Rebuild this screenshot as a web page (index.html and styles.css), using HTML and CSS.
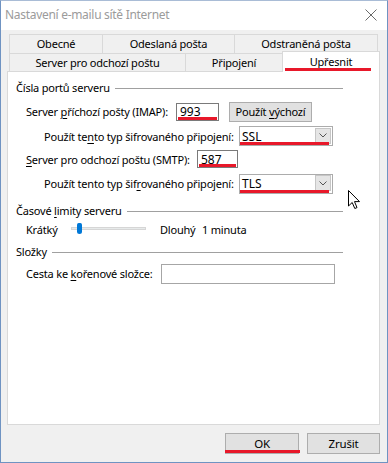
FILE: index.html
```html
<!DOCTYPE html>
<html lang="cs">
<head>
<meta charset="utf-8">
<title>Nastavení e-mailu sítě Internet</title>
<link rel="stylesheet" href="styles.css">
</head>
<body>
<div class="win">
  <div class="titlebar">
    <span class="title">Nastavení e-mailu sítě Internet</span>
    <svg class="close" width="12" height="12" viewBox="0 0 12 12"><path d="M0.5 0.5 L11.5 11.5 M11.5 0.5 L0.5 11.5" stroke="#6a6a6a" stroke-width="1" fill="none"/></svg>
  </div>
  <div class="client">
    <div class="tabs">
      <div class="tabrow r1">
        <div class="tab w-obecne"><span>Obecné</span></div>
        <div class="tab w-odeslana"><span>Odeslaná pošta</span></div>
        <div class="tab w-odstranena"><span>Odstraněná pošta</span></div>
      </div>
      <div class="tabrow r2">
        <div class="tab w-server"><span>Server pro odchozí poštu</span></div>
        <div class="tab w-pripojeni"><span>Připojení</span></div>
        <div class="tab w-upresnit selected mark"><span>Upřesnit</span></div>
      </div>
    </div>
    <div class="panel">
      <div class="legend"><span class="lt">Čísla portů serveru</span><i class="rule"></i></div>
      <div class="row r-imap">
        <span class="lbl l-imap">Server <u>p</u>říchozí pošty (IMAP):</span>
        <span class="input i-imap mark"><span>993</span></span>
        <span class="btn b-default"><span>Použít <u>v</u>ýchozí</span></span>
      </div>
      <div class="row r-ssl">
        <span class="lbl l-enc">Použít te<u>n</u>to typ šifrovaného připojení:</span>
        <span class="select mark"><span class="val">SSL</span><span class="drop"><svg width="8" height="5" viewBox="0 0 8 5"><path d="M0.5 0.5 L4 4 L7.5 0.5" stroke="#555" fill="none"/></svg></span></span>
      </div>
      <div class="row r-smtp">
        <span class="lbl l-smtp"><u>S</u>erver pro odchozí poštu (SMTP):</span>
        <span class="input i-smtp mark"><span>587</span></span>
      </div>
      <div class="row r-tls">
        <span class="lbl l-enc">Použít tento typ šif<u>r</u>ovaného připojení:</span>
        <span class="select mark"><span class="val">TLS</span><span class="drop"><svg width="8" height="5" viewBox="0 0 8 5"><path d="M0.5 0.5 L4 4 L7.5 0.5" stroke="#555" fill="none"/></svg></span></span>
      </div>
      <div class="legend lg-time"><span class="lt">Časové <u>l</u>imity serveru</span><i class="rule"></i></div>
      <div class="row r-slider">
        <span class="lbl l-short">Krátký</span>
        <span class="slider"><span class="track"></span><span class="thumb"></span></span>
        <span class="lbl l-long">Dlouhý</span>
        <span class="lbl">1 minuta</span>
      </div>
      <div class="legend lg-folders"><span class="lt">Složky</span><i class="rule"></i></div>
      <div class="row r-path">
        <span class="lbl l-path">Cesta ke <u>k</u>ořenové složce:</span>
        <span class="input i-path"></span>
      </div>
    </div>
    <div class="buttons">
      <span class="btn b-ok mark"><span>OK</span></span>
      <span class="btn b-cancel"><span>Zrušit</span></span>
    </div>
  </div>
  <svg class="cursor" width="13" height="20" viewBox="0 0 13 20"><path d="M0.5 0.5 L0.5 16 L4.2 12.5 L6.8 18.5 L9 17.6 L6.5 11.6 L11.5 11.6 Z" fill="#fff" stroke="#000" stroke-width="1" stroke-linejoin="miter"/></svg>
</div>
</body>
</html>
```
FILE: styles.css
```css
* { box-sizing: border-box; }
html, body { margin: 0; padding: 0; background: #fff; }
body {
  font-family: "Noto Sans", "Open Sans", sans-serif;
  font-size: 11px;
  letter-spacing: -0.2px;
  color: #000;
}
u { text-decoration: underline; text-underline-offset: 2px; text-decoration-thickness: 1px; }

.win {
  position: relative;
  width: 388px;
  height: 463px;
  border: 1px solid #6f93c2;
  border-top-color: #a9bcd6;
  background: #f0f0f0;
  display: flex;
  flex-direction: column;
  overflow: hidden;
}
.titlebar {
  height: 29px;
  flex-shrink: 0;
  background: #fff;
  display: flex;
  align-items: center;
  padding-left: 4px;
  padding-right: 10px;
}
.title {
  font-size: 12px;
  letter-spacing: -0.3px;
  color: #9b9b9b;
  flex: 1;
  margin-top: -2px;
  white-space: nowrap;
}
.close { margin-top: -1px; }

.client {
  flex: 1;
  display: flex;
  flex-direction: column;
  padding: 4px 7px 0 6px;
}
.tabs { margin-left: 2px; }
.tabrow { display: flex; }
.tab {
  border: 1px solid #d9d9d9;
  border-bottom: none;
  background: #f0f0f0;
  display: flex;
  align-items: center;
  justify-content: center;
  margin-left: -1px;
  padding-bottom: 1px;
  white-space: nowrap;
  flex-shrink: 0;
}
.tab:first-child { margin-left: 0; }
.r1 { height: 19px; }
.r2 { height: 18px; align-items: flex-start; }
.r2 .tab { height: 18px; }
.w-obecne { width: 94px; }
.w-odeslana { width: 133px; }
.w-odstranena { width: 144px; }
.w-server { width: 177px; }
.w-pripojeni { width: 98px; }
.w-upresnit { width: 98px; }
.r2 .tab.selected {
  height: 21px;
  margin-top: -2px;
  background: #fff;
  position: relative;
  z-index: 1;
  padding-bottom: 2px;
}

.panel {
  height: 354px;
  flex-shrink: 0;
  border: 1px solid #d9d9d9;
  background: #fff;
  display: flex;
  flex-direction: column;
  padding: 0 0 0 8px;
}
.legend {
  display: flex;
  align-items: center;
  height: 15px;
  margin-top: 8px;
  width: 327px;
}
.legend .lt { white-space: nowrap; }
.legend .rule {
  flex: 1;
  height: 1px;
  background: #a0a0a0;
  margin-left: 5px;
  margin-top: 1px;
}
.lg-time { margin-top: 10px; }
.lg-folders { margin-top: 8px; }

.row { display: flex; align-items: center; padding-left: 10px; }
.row > * { flex-shrink: 0; white-space: nowrap; }
.r-imap { height: 19px; margin-top: 7px; }
.r-ssl { height: 20px; margin-top: 5px; padding-left: 28px; }
.r-smtp { height: 18px; margin-top: 4px; }
.r-tls { height: 19px; margin-top: 6px; padding-left: 28px; }
.r-slider { height: 14px; margin-top: 4px; }
.r-path { height: 19px; margin-top: 5px; }

.l-imap { width: 150px; }
.l-smtp { width: 171px; }
.l-enc { width: 195px; }
.l-short { width: 45px; }
.l-long { width: 42px; }
.l-path { width: 135px; }

.input {
  height: 18px;
  border: 1px solid #7a7a7a;
  background: #fff;
  display: flex;
  align-items: center;
  padding-left: 3px;
  font-size: 12px;
  letter-spacing: 0;
}
.i-imap { width: 43px; height: 18px; }
.i-smtp { width: 41px; height: 18px; }
.i-path { width: 174px; height: 20px; border-color: #a6a6a6; }

.btn {
  background: #e1e1e1;
  border: 1px solid #adadad;
  display: flex;
  align-items: center;
  justify-content: center;
  white-space: nowrap;
}
.b-default { width: 83px; height: 20px; margin-left: 10px; }

.select {
  width: 94px;
  height: 20px;
  border: 1px solid #acacac;
  background: #fff;
  display: flex;
  align-items: center;
  justify-content: space-between;
  padding-left: 2px;
  font-size: 12px;
  letter-spacing: 0;
}
.select .drop {
  width: 16px;
  height: 16px;
  margin-right: 1px;
  background: #e5e5e5;
  border: 1px solid #c6c6c6;
  display: flex;
  align-items: center;
  justify-content: center;
  margin-bottom: 1px;
}

.slider { position: relative; width: 75px; height: 14px; margin-right: 14px; }
.slider .track {
  display: block;
  margin-top: 5px;
  height: 3px;
  background: #e7eaea;
  border: 1px solid #d6d6d6;
}
.slider .thumb {
  position: absolute;
  left: 6px;
  top: 1px;
  width: 5px;
  height: 11px;
  background: #0078d7;
  border-radius: 2px 2px 3px 3px;
}

.buttons {
  display: flex;
  justify-content: flex-end;
  gap: 8px;
  margin-top: 8px;
}
.b-ok, .b-cancel { width: 73px; height: 21px; font-size: 11.5px; }
.b-ok { width: 74px; }

.mark { position: relative; }
.mark::after {
  content: "";
  position: absolute;
  height: 3px;
  background: #e8182a;
  z-index: 2;
}
.i-imap.mark::after { left: 1px; right: 1px; bottom: 0; }
.i-smtp.mark::after { left: 1px; right: 1px; bottom: 0; }
.select.mark::after { left: 0; right: 3px; bottom: 0; }
.selected.mark::after { left: 2px; right: 8px; bottom: 1px; }
.b-ok.mark::after { left: -1px; right: -2px; bottom: 0; }

.cursor { position: absolute; left: 347px; top: 189px; }
```
